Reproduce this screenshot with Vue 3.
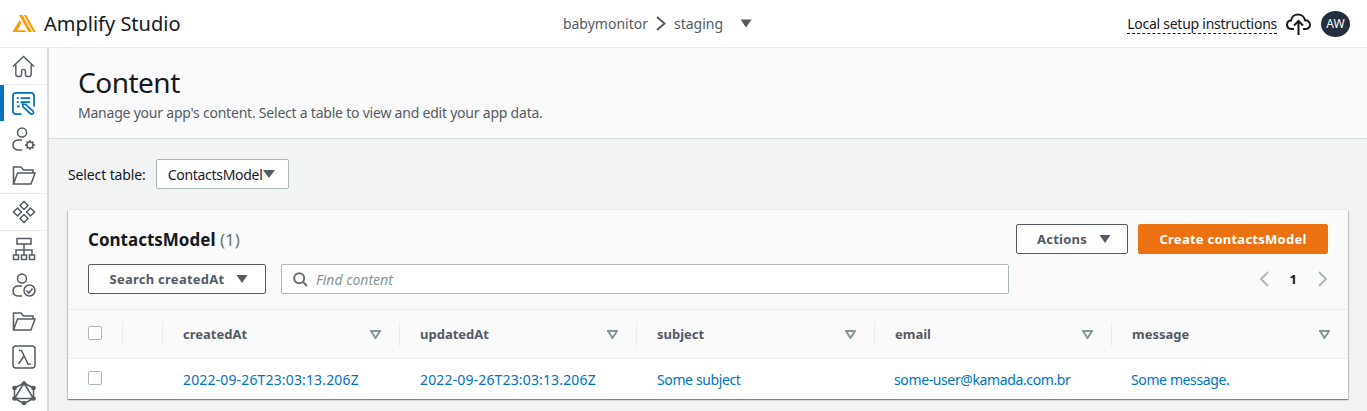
<template>
  <div class="app">
    <header class="topbar">
      <div class="brand">
        <svg class="brand-logo" width="24" height="19" viewBox="0 0 24 19">
          <path d="M0.5 18 L7.5 6 L9.3 9.2 L5.2 16.3 H13 L14 18 Z" fill="#ff9900" />
          <path d="M7 1 L10.3 1 L20 18 L16.7 18 Z M11.8 1 L14.2 1 L23.7 18 L21.3 18 Z" fill="#ff9900" />
        </svg>
        <span class="brand-name">Amplify Studio</span>
      </div>
      <div class="crumbs">
        <span>babymonitor</span>
        <svg width="10" height="15" viewBox="0 0 10 15"><path d="M1 1 L8.5 7.5 L1 14" fill="none" stroke="#545b64" stroke-width="2" /></svg>
        <span>staging</span>
        <svg class="crumb-caret" width="12" height="9" viewBox="0 0 12 9"><path d="M0.5 0.5 H11.5 L6 8.5 Z" fill="#545b64" /></svg>
      </div>
      <div class="top-right">
        <span class="setup">Local setup instructions</span>
        <svg width="25" height="22" viewBox="0 0 25 22">
          <path d="M8 16 H6 C2.5 16 1 13.8 1 11.5 C1 9 3 7.3 5 7.5 C5.6 3.6 8.8 1.5 12 1.5 C15.6 1.5 18.4 4 19 7.3 C21.8 7.2 24 9 24 11.6 C24 14 22.2 16 19.5 16 H17" fill="none" stroke="#16191f" stroke-width="2" />
          <path d="M12.5 22 V8 M8 12.5 L12.5 8 L17 12.5" fill="none" stroke="#16191f" stroke-width="2" />
        </svg>
        <span class="avatar">AW</span>
      </div>
    </header>

    <div class="body">
      <nav class="sidenav">
        <div class="nav-group">
          <div class="nav-item">
            <svg width="23" height="23" viewBox="0 0 24 24" class="ico">
              <path d="M1 12 L12 1.5 L23 12 M4 10 V20 Q4 22.5 6.5 22.5 H7.5 Q10 22.5 10 20 V17 Q10 15 12 15 Q14 15 14 17 V20 Q14 22.5 16.5 22.5 H17.5 Q20 22.5 20 20 V10" />
            </svg>
          </div>
        </div>
        <div class="nav-group">
          <div class="nav-item active">
            <svg width="23" height="23" viewBox="0 0 24 24" class="ico blue">
              <path d="M10 23 H4 Q1 23 1 20 V4 Q1 1 4 1 H20 Q23 1 23 4 V15" />
              <path d="M5 6.5 H7 M9 6.5 H19 M5 10.5 H7 M9 10.5 H19 M5 15 H8" />
              <path d="M11 12.5 L14.5 13 L22 20 Q23.2 22.5 21 23 Q19.5 23.3 18.5 22 L11.5 15.5 Z" />
            </svg>
          </div>
          <div class="nav-item">
            <svg width="24" height="24" viewBox="0 0 24 24" class="ico">
              <circle cx="10" cy="5.5" r="4.5" />
              <path d="M10 13 H7 Q1 13 1 18 Q1 23 7 23 H10" />
              <circle cx="18" cy="18" r="3" />
              <path d="M18 13 V15 M18 21 V23 M13 18 H15 M21 18 H23 M14.5 14.5 L16 16 M20 20 L21.5 21.5 M14.5 21.5 L16 20 M20 16 L21.5 14.5" />
            </svg>
          </div>
          <div class="nav-item">
            <svg width="24" height="24" viewBox="0 0 24 24" class="ico">
              <path d="M1.5 21 V4 H9 L11.5 7 H21 V10 M1.5 21 L5.5 10 H23 L19 21 Z" />
            </svg>
          </div>
        </div>
        <div class="nav-group">
          <div class="nav-item">
            <svg width="24" height="24" viewBox="0 0 24 24" class="ico">
              <path d="M12 1.5 L16 5.5 L12 9.5 L8 5.5 Z M12 14.5 L16 18.5 L12 22.5 L8 18.5 Z M5.5 8 L9.5 12 L5.5 16 L1.5 12 Z M18.5 8 L22.5 12 L18.5 16 L14.5 12 Z" />
            </svg>
          </div>
        </div>
        <div class="nav-group last">
          <div class="nav-item">
            <svg width="24" height="24" viewBox="0 0 24 24" class="ico">
              <path d="M5 1.5 H19 V7 H5 Z M12 7 V13 M4 18 V13 H20 V18 M12 13 V18 M1.5 18 H6.5 V22.5 H1.5 Z M9.5 18 H14.5 V22.5 H9.5 Z M17.5 18 H22.5 V22.5 H17.5 Z" />
            </svg>
          </div>
          <div class="nav-item">
            <svg width="24" height="24" viewBox="0 0 24 24" class="ico">
              <circle cx="10" cy="5.5" r="4.5" />
              <path d="M10 13 H7 Q1 13 1 18 Q1 23 7 23 H10" />
              <circle cx="17.5" cy="17.5" r="5.5" />
              <path d="M14.5 17.5 L16.8 20 L20.5 15.5" />
            </svg>
          </div>
          <div class="nav-item">
            <svg width="24" height="24" viewBox="0 0 24 24" class="ico">
              <path d="M1.5 21 V4 H9 L11.5 7 H21 V10 M1.5 21 L5.5 10 H23 L19 21 Z" />
            </svg>
          </div>
          <div class="nav-item">
            <svg width="24" height="24" viewBox="0 0 24 24" class="ico">
              <rect x="1" y="1" width="22" height="22" rx="3" />
              <path d="M7 5.5 H9.5 L16 19 H19 M12 11 L6.5 19" />
            </svg>
          </div>
          <div class="nav-item">
            <svg width="24" height="24" viewBox="0 0 24 24" class="ico">
              <path d="M12 2 L21.5 7 V17.5 L12 22.5 L2.5 17.5 V7 Z M12 2 L21.5 17.5 H2.5 Z" />
              <circle cx="12" cy="2.5" r="1.6" fill="#545b64" />
              <circle cx="21.5" cy="7" r="1.6" fill="#545b64" />
              <circle cx="21.5" cy="17.5" r="1.6" fill="#545b64" />
              <circle cx="12" cy="22" r="1.6" fill="#545b64" />
              <circle cx="2.5" cy="17.5" r="1.6" fill="#545b64" />
              <circle cx="2.5" cy="7" r="1.6" fill="#545b64" />
            </svg>
          </div>
        </div>
      </nav>

      <main class="main">
        <section class="page-head">
          <h1>Content</h1>
          <p>Manage your app's content. Select a table to view and edit your app data.</p>
        </section>

        <section class="content">
          <div class="select-row">
            <span class="select-label">Select table:</span>
            <div class="select-box">
              <span>ContactsModel</span>
              <svg width="12" height="8" viewBox="0 0 12 8"><path d="M0 0 H12 L6 8 Z" fill="#545b64" /></svg>
            </div>
          </div>

          <div class="card">
            <div class="card-head">
              <div class="title-row">
                <h2>ContactsModel <span class="count">(1)</span></h2>
                <div class="actions">
                  <button class="btn caret-btn">
                    Actions
                    <svg width="12" height="8" viewBox="0 0 12 8"><path d="M0.5 0 H11.5 L6 8 Z" fill="#545b64" /></svg>
                  </button>
                  <button class="btn primary">Create contactsModel</button>
                </div>
              </div>
              <div class="filter-row">
                <button class="btn caret-btn search-btn">
                  Search createdAt
                  <svg width="12" height="8" viewBox="0 0 12 8"><path d="M0.5 0 H11.5 L6 8 Z" fill="#545b64" /></svg>
                </button>
                <div class="find">
                  <svg width="15" height="15" viewBox="0 0 15 15"><circle cx="6.2" cy="6.2" r="5" fill="none" stroke="#687078" stroke-width="2" /><path d="M9.8 9.8 L14 14" stroke="#687078" stroke-width="2" /></svg>
                  <span>Find content</span>
                </div>
                <div class="pager">
                  <svg width="10" height="16" viewBox="0 0 10 16"><path d="M9 1 L2 8 L9 15" class="pg" /></svg>
                  <span>1</span>
                  <svg width="10" height="16" viewBox="0 0 10 16"><path d="M1 1 L8 8 L1 15" class="pg" /></svg>
                </div>
              </div>
            </div>

            <div class="grid head-row">
              <div class="cell check-cell"><span class="checkbox"></span></div>
              <div class="cell sep"></div>
              <div class="cell sep col-head" v-for="c in columns" :key="c">
                <span>{{ c }}</span>
                <svg width="11" height="9" viewBox="0 0 11 9"><path d="M1 1 H10 L5.5 8 Z" fill="none" stroke="#879596" stroke-width="2" /></svg>
              </div>
            </div>
            <div class="grid data-row">
              <div class="cell check-cell"><span class="checkbox"></span></div>
              <div class="cell"></div>
              <div class="cell data" :class="{ date: i < 2, nudge: i < 3 }" v-for="(v, i) in row" :key="i">{{ v }}</div>
            </div>
          </div>
        </section>
      </main>
    </div>
  </div>
</template>

<script setup>
const columns = ['createdAt', 'updatedAt', 'subject', 'email', 'message']
const row = [
  '2022-09-26T23:03:13.206Z',
  '2022-09-26T23:03:13.206Z',
  'Some subject',
  'some-user@kamada.com.br',
  'Some message.'
]
</script>

<style>
html, body {
  margin: 0;
  height: 100%;
  overflow: hidden;
}
</style>

<style scoped>
.app {
  width: 1367px;
  height: 411px;
  overflow: hidden;
  font-family: "Noto Sans", "Open Sans", sans-serif;
  color: #16191f;
  background: #f2f3f3;
}
.topbar {
  height: 47px;
  background: #fff;
  border-bottom: 1px solid #eaeded;
  display: grid;
  grid-template-columns: 1fr auto 1fr;
  align-items: center;
  padding: 0 17px 0 12px;
}
.brand {
  display: flex;
  align-items: center;
  gap: 8px;
}
.brand-name {
  font-size: 20px;
}
.crumbs {
  display: flex;
  align-items: center;
  gap: 8px;
  font-size: 14px;
  color: #545b64;
  margin-right: 47px;
}
.crumb-caret {
  margin-left: 9px;
}
.top-right {
  display: flex;
  align-items: center;
  justify-content: flex-end;
  gap: 10px;
}
.setup {
  font-size: 14px;
  letter-spacing: -0.25px;
  line-height: 19px;
  border-bottom: 1px dashed #16191f;
  margin-right: -1px;
}
.avatar {
  width: 29px;
  height: 26px;
  border-radius: 50%;
  background: #232f3e;
  color: #fff;
  font-size: 12px;
  display: flex;
  align-items: center;
  justify-content: center;
}
.body {
  display: flex;
  height: 363px;
}
.sidenav {
  width: 47px;
  flex: none;
  background: #fff;
  border-right: 2px solid #d5dbdb;
}
.nav-group {
  border-bottom: 1px solid #eaeded;
}
.nav-group.last {
  border-bottom: none;
}
.nav-item {
  height: 36px;
  display: flex;
  align-items: center;
  justify-content: center;
  position: relative;
}
.nav-item.active::before {
  content: "";
  position: absolute;
  left: 0;
  top: 0;
  width: 4px;
  height: 36px;
  background: #0073bb;
}
.ico {
  fill: none;
  stroke: #545b64;
  stroke-width: 1.5;
}
.ico.blue {
  stroke: #0073bb;
  stroke-width: 1.8;
}
.main {
  flex: 1;
  min-width: 0;
}
.page-head {
  height: 91px;
  box-sizing: border-box;
  background: #fafafa;
  border-bottom: 1px solid #d5dbdb;
  padding: 15px 0 0 29px;
}
.page-head h1 {
  margin: 0;
  font-size: 28px;
  letter-spacing: -0.5px;
  line-height: 38px;
  font-weight: 400;
}
.page-head p {
  margin: 3px 0 0;
  font-size: 14px;
  letter-spacing: -0.22px;
  line-height: 18px;
  color: #545b64;
}
.content {
  padding: 20px 19px 0 19px;
}
.select-row {
  display: flex;
  align-items: center;
  gap: 10px;
  height: 30px;
  margin-bottom: 21px;
}
.select-label {
  font-size: 14px;
  letter-spacing: -0.12px;
}
.select-box {
  width: 133px;
  height: 30px;
  box-sizing: border-box;
  background: #fff;
  border: 1px solid #aab7b8;
  border-radius: 2px;
  display: flex;
  align-items: center;
  justify-content: space-between;
  padding: 0 13px 0 11px;
  font-size: 14px;
  letter-spacing: -0.3px;
}
.card {
  background: #fff;
  box-shadow: 0 1px 1px 0 rgba(0, 28, 36, 0.3), 1px 1px 1px 0 rgba(0, 28, 36, 0.15), -1px 1px 1px 0 rgba(0, 28, 36, 0.15), 0 0 1px rgba(0, 28, 36, 0.2);
}
.card-head {
  height: 100px;
  box-sizing: border-box;
  background: #fafafa;
  border-bottom: 1px solid #eaeded;
  padding: 14px 20px 0;
}
.title-row {
  display: flex;
  justify-content: space-between;
  align-items: center;
  height: 30px;
}
h2 {
  margin: 0;
  font-size: 17px;
  font-weight: 700;
}
.count {
  font-weight: 400;
  color: #687078;
}
.actions {
  display: flex;
  gap: 10px;
}
.btn {
  height: 30px;
  box-sizing: border-box;
  border: 1px solid #545b64;
  border-radius: 2px;
  background: #fff;
  color: #545b64;
  font-family: inherit;
  font-size: 13px;
  font-weight: 700;
  letter-spacing: 0.25px;
  display: flex;
  align-items: center;
  justify-content: center;
  gap: 12px;
  padding: 0;
}
.caret-btn {
  padding-left: 4px;
}
.actions .btn.caret-btn {
  width: 112px;
}
.actions .btn.primary {
  width: 190px;
  background: #ec7211;
  border-color: #ec7211;
  color: #fff;
}
.filter-row {
  display: flex;
  align-items: center;
  height: 30px;
  margin-top: 10px;
}
.search-btn {
  width: 178px;
  flex: none;
}
.find {
  width: 728px;
  height: 30px;
  margin-left: 15px;
  flex: none;
  box-sizing: border-box;
  background: #fff;
  border: 1px solid #aab7b8;
  border-radius: 2px;
  display: flex;
  align-items: center;
  gap: 8px;
  padding-left: 11px;
  font-size: 14px;
  font-style: italic;
  color: #879596;
}
.pager {
  margin-left: auto;
  display: flex;
  align-items: center;
  gap: 21px;
  font-size: 13px;
  font-weight: 700;
}
.pg {
  fill: none;
  stroke: #aab7b8;
  stroke-width: 2;
}
.grid {
  display: grid;
  grid-template-columns: 54px 40px 237px 237px 238px 237px 1fr;
  background: #fafafa;
}
.head-row {
  height: 49px;
  border-bottom: 1px solid #eaeded;
  box-sizing: border-box;
  align-items: center;
}
.data-row {
  height: 40px;
  background: #fff;
  align-items: center;
}
.cell {
  box-sizing: border-box;
  min-width: 0;
}
.head-row .cell {
  height: 24px;
}
.check-cell {
  display: flex;
  align-items: center;
  padding-left: 20px;
}
.checkbox {
  width: 12px;
  height: 12px;
  margin-top: -2px;
  background: #fff;
  border: 1px solid #aab7b8;
  border-radius: 2px;
}
.sep {
  border-left: 1px solid #eaeded;
}
.col-head {
  display: flex;
  align-items: center;
  justify-content: space-between;
  padding: 0 18px 0 20px;
  font-size: 13px;
  font-weight: 700;
  color: #545b64;
}
.data {
  font-size: 14px;
  letter-spacing: -0.38px;
  color: #0073bb;
  padding-left: 20px;
  white-space: nowrap;
}
.data.nudge {
  padding-left: 21px;
}
.data.date {
  letter-spacing: 0.15px;
}
</style>
